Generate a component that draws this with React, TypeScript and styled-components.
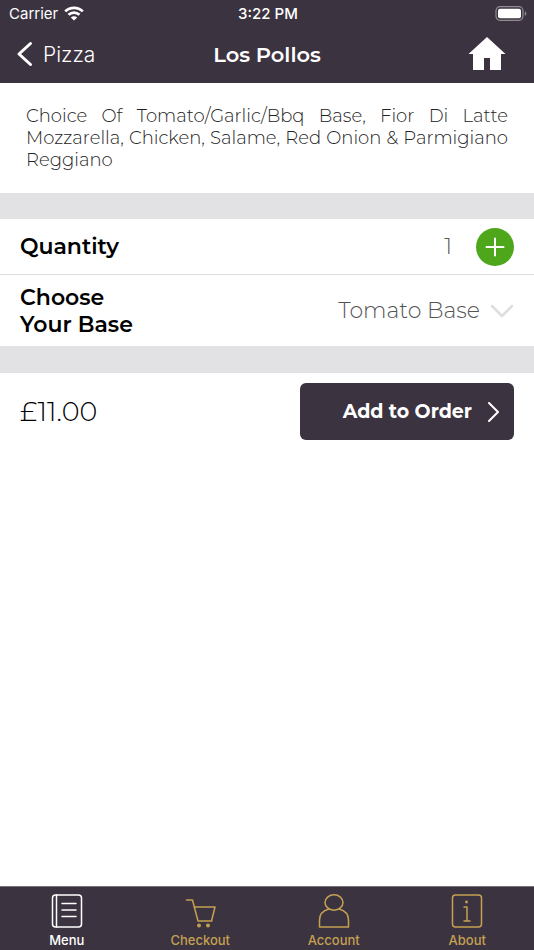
import React from "react";
import styled, { createGlobalStyle } from "styled-components";

const plum = "#3c3340";
const gold = "#c4a052";

const GlobalStyle = createGlobalStyle`
  *, *::before, *::after { box-sizing: border-box; }
  body {
    margin: 0;
    background: #ffffff;
    color: #000000;
    font-family: Montserrat, Inter, sans-serif;
  }
  button, select { font: inherit; color: inherit; }
  svg { display: block; flex: none; }
`;

const Screen = styled.div`
  min-height: 100vh;
  display: flex;
  flex-direction: column;
`;

const Header = styled.header`
  background: ${plum};
  color: #ffffff;
`;

const StatusBar = styled.div`
  display: grid;
  grid-template-columns: 1fr auto 1fr;
  align-items: center;
  height: 27px;
  padding: 0 7px 0 9px;
  font-family: Inter, sans-serif;
  font-size: 15px;
`;

const Carrier = styled.div`
  display: flex;
  align-items: center;
  gap: 6px;
`;

const Clock = styled.time`
  font-weight: 500;
`;

const Battery = styled.div`
  justify-self: end;
`;

const NavBar = styled.nav`
  display: grid;
  grid-template-columns: 1fr auto 1fr;
  align-items: center;
  height: 56px;
  padding: 0 16px 2px;
`;

const BackLink = styled.a`
  display: flex;
  align-items: center;
  gap: 10px;
  justify-self: start;
  color: inherit;
  text-decoration: none;
  font-family: Inter, sans-serif;
  font-size: 21px;
  font-weight: 300;
`;

const Title = styled.h1`
  margin: 0;
  font-size: 21px;
  font-weight: 600;
`;

const HomeLink = styled.a`
  justify-self: end;
  margin-right: 12px;
  color: inherit;
`;

const Description = styled.p`
  margin: 0;
  padding: 22px 26px;
  font-size: 18px;
  font-weight: 300;
  line-height: 22px;
  text-align: justify;
  color: #222222;
`;

const Options = styled.section`
  border: solid #e2e2e4;
  border-width: 26px 0 27px;
`;

const Row = styled.div<{ $tall?: boolean }>`
  display: flex;
  align-items: center;
  justify-content: space-between;
  min-height: ${(p) => (p.$tall ? 72 : 55)}px;
  padding: 0 20px;

  & + & { border-top: 1px solid #dedee0; }
`;

const Label = styled.label`
  width: 128px;
  font-size: 22px;
  font-weight: 600;
  line-height: 27px;
`;

const Stepper = styled.div`
  display: flex;
  align-items: center;
  gap: 24px;
  color: #555555;
  font-size: 22px;
  font-weight: 300;
`;

const AddButton = styled.button`
  display: grid;
  place-items: center;
  width: 38px;
  height: 38px;
  padding: 0;
  border: 0;
  border-radius: 50%;
  background: #4ea71b;
  color: #ffffff;
`;

const Picker = styled.div`
  display: flex;
  align-items: center;
  gap: 10px;
`;

const Select = styled.select`
  appearance: none;
  field-sizing: content;
  padding: 0;
  border: 0;
  background: transparent;
  color: #555555;
  font-size: 22px;
  font-weight: 300;
`;

const OrderRow = styled.section`
  display: flex;
  align-items: center;
  justify-content: space-between;
  padding: 10px 20px;
`;

const Price = styled.output`
  font-size: 27px;
  font-weight: 300;
`;

const OrderButton = styled.button`
  display: flex;
  align-items: center;
  justify-content: flex-end;
  gap: 16px;
  min-width: 214px;
  height: 57px;
  padding: 0 15px;
  border: 0;
  border-radius: 6px;
  background: ${plum};
  color: #ffffff;
  font-size: 19px;
  font-weight: 700;
  white-space: nowrap;
`;

const TabBar = styled.nav`
  display: grid;
  grid-template-columns: repeat(4, 1fr);
  height: 64px;
  margin-top: auto;
  border-top: 1px solid #77717a;
  background: ${plum};
`;

const Tab = styled.a<{ $active?: boolean }>`
  display: flex;
  flex-direction: column;
  align-items: center;
  gap: 4px;
  padding-top: 7px;
  color: ${(p) => (p.$active ? "#ffffff" : gold)};
  text-decoration: none;
  font-family: Inter, sans-serif;
  font-size: 13px;
  font-weight: 500;
  line-height: 16px;
`;

const WifiIcon = () => (
  <svg width="20" height="15" viewBox="0 0 20 15" fill="none" stroke="currentColor" strokeWidth="2.7" aria-hidden="true">
    <path d="M1.2 5.4C6.2.6 13.8.6 18.8 5.4" />
    <path d="M4.5 8.8C7.7 5.9 12.3 5.9 15.5 8.8" />
    <path d="M10 14.5 6.8 11.4C8.6 9.8 11.4 9.8 13.2 11.4Z" fill="currentColor" stroke="none" />
  </svg>
);

const BatteryIcon = () => (
  <svg width="32" height="15" viewBox="0 0 32 15" aria-hidden="true">
    <rect x="1" y=".7" width="27" height="13.6" rx="4" fill="none" stroke="#928c94" strokeWidth="1.2" />
    <rect x="3" y="2.7" width="23" height="9.6" rx="2" fill="#fff" />
    <path d="M29.8 5.2c2 .8 2 3.8 0 4.6z" fill="#928c94" />
  </svg>
);

const BackIcon = () => (
  <svg width="17" height="26" viewBox="0 0 17 26" fill="none" stroke="currentColor" strokeWidth="3" strokeLinecap="round" strokeLinejoin="round" aria-hidden="true">
    <path d="M14.5 2.5 3 13l11.5 10.5" />
  </svg>
);

const HomeIcon = () => (
  <svg width="38" height="34" viewBox="0 0 38 34" fill="currentColor" aria-hidden="true">
    <path d="M19 0 .5 17H5v16h11V21h6v12h11V17h4.5z" />
  </svg>
);

const PlusIcon = () => (
  <svg width="20" height="20" viewBox="0 0 20 20" stroke="currentColor" strokeWidth="2" strokeLinecap="round" aria-hidden="true">
    <path d="M10 1.5v17M1.5 10h17" />
  </svg>
);

const DownIcon = () => (
  <svg width="24" height="14" viewBox="0 0 24 14" fill="none" stroke="#dededf" strokeWidth="2.5" strokeLinecap="round" strokeLinejoin="round" aria-hidden="true">
    <path d="M2 2l10 10L22 2" />
  </svg>
);

const NextIcon = () => (
  <svg width="11" height="20" viewBox="0 0 11 20" fill="none" stroke="currentColor" strokeWidth="2" strokeLinecap="round" strokeLinejoin="round" aria-hidden="true">
    <path d="M1 1l9 9-9 9" />
  </svg>
);

const TabIcon = ({ children }: { children: React.ReactNode }) => (
  <svg width="32" height="34" viewBox="0 0 32 34" fill="none" stroke="currentColor" strokeWidth="1.5" strokeLinecap="round" strokeLinejoin="round" aria-hidden="true">
    {children}
  </svg>
);

const tabs = [
  {
    name: "Menu",
    active: true,
    icon: (
      <>
        <rect x="1.5" y="1" width="29" height="32" rx="3" />
        <path d="M5.5 1v32M11 9.500h14M11 16h14M11 22.500h14" />
      </>
    ),
  },
  {
    name: "Checkout",
    icon: (
      <>
        <path d="M2.5 6h6L14 27h14M10 13h21l-3.500 14" />
        <circle cx="15" cy="31.5" r="1.2" fill="currentColor" />
        <circle cx="24" cy="31.5" r="1.2" fill="currentColor" />
      </>
    ),
  },
  {
    name: "Account",
    icon: (
      <>
        <ellipse cx="16" cy="8.5" rx="9" ry="7.700" />
        <path d="M11 15C5.500 16.500 1.500 20.500 1.500 26v7h29v-7c0-5.500-4-9.500-9.500-11" />
      </>
    ),
  },
  {
    name: "About",
    icon: (
      <>
        <rect x="1.5" y="1" width="29" height="32" rx="3" />
        <circle cx="15.5" cy="8" r="1.4" fill="currentColor" stroke="none" />
        <path d="M13 13h3v14M13 27h6" />
      </>
    ),
  },
];

export default function App() {
  const [quantity, setQuantity] = React.useState(1);

  return (
    <>
      <GlobalStyle />
      <Screen>
        <Header>
          <StatusBar>
            <Carrier>Carrier <WifiIcon /></Carrier>
            <Clock>3:22 PM</Clock>
            <Battery><BatteryIcon /></Battery>
          </StatusBar>
          <NavBar>
            <BackLink href="#pizza"><BackIcon />Pizza</BackLink>
            <Title>Los Pollos</Title>
            <HomeLink href="#home" aria-label="Home"><HomeIcon /></HomeLink>
          </NavBar>
        </Header>
        <main>
          <Description>
            Choice Of Tomato/Garlic/Bbq Base, Fior Di Latte Mozzarella, Chicken, Salame, Red Onion &amp; Parmigiano Reggiano
          </Description>
          <Options>
            <Row>
              <Label htmlFor="quantity">Quantity</Label>
              <Stepper>
                <output id="quantity">{quantity}</output>
                <AddButton type="button" aria-label="Increase quantity" onClick={() => setQuantity(quantity + 1)}>
                  <PlusIcon />
                </AddButton>
              </Stepper>
            </Row>
            <Row $tall>
              <Label htmlFor="base">Choose Your Base</Label>
              <Picker>
                <Select id="base">
                  <option>Tomato Base</option>
                </Select>
                <DownIcon />
              </Picker>
            </Row>
          </Options>
          <OrderRow>
            <Price>£{(11 * quantity).toFixed(2)}</Price>
            <OrderButton type="button">Add to Order<NextIcon /></OrderButton>
          </OrderRow>
        </main>
        <TabBar aria-label="Main">
          {tabs.map((tab) => (
            <Tab key={tab.name} href={`#${tab.name.toLowerCase()}`} $active={tab.active} aria-current={tab.active ? "page" : undefined}>
              <TabIcon>{tab.icon}</TabIcon>
              {tab.name}
            </Tab>
          ))}
        </TabBar>
      </Screen>
    </>
  );
}
